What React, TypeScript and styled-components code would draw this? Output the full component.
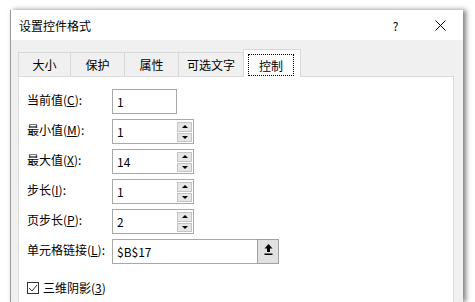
import React from 'react';
import styled, { createGlobalStyle } from 'styled-components';

const GlobalStyle = createGlobalStyle`
  html, body {
    margin: 0;
    padding: 0;
    background: #ffffff;
    overflow: hidden;
  }
  body {
    font-family: "Noto Sans CJK SC", "Noto Sans", sans-serif;
    font-size: 12px;
    color: #000000;
  }
`;

const Window = styled.div`
  margin: 10px 0 0 10px;
  width: 452px;
  height: 292px;
  border-left: 1px solid #9a9a9a;
  background: #f0f0f0;
  box-shadow: 3px 0 5px rgba(0, 0, 0, 0.5);
  display: flex;
  flex-direction: column;
`;

const TitleBar = styled.div`
  height: 30px;
  background: #ffffff;
  display: flex;
  align-items: center;
  padding-left: 8px;
`;

const Title = styled.div`
  flex: 1;
  line-height: 17px;
`;

const CaptionButton = styled.div`
  width: 45px;
  height: 30px;
  display: flex;
  align-items: center;
  justify-content: center;
  font-size: 12px;
`;

const Body = styled.div`
  flex: 1;
  min-height: 0;
  padding: 9px 9px 0 7px;
  display: flex;
  flex-direction: column;
`;

const TabRow = styled.div`
  display: flex;
  align-items: flex-end;
  position: relative;
  z-index: 1;
`;

const Tab = styled.div<{ $w: number; $active?: boolean }>`
  box-sizing: border-box;
  width: ${({ $w }) => $w}px;
  height: ${({ $active }) => ($active ? 28 : 24)}px;
  margin-bottom: ${({ $active }) => ($active ? -1 : 0)}px;
  margin-left: -1px;
  border: 1px solid #d9d9d9;
  border-bottom: none;
  background: ${({ $active }) => ($active ? '#ffffff' : '#f0f0f0')};
  position: relative;
  z-index: ${({ $active }) => ($active ? 2 : 1)};
  display: flex;
  align-items: center;
  justify-content: ${({ $active }) => ($active ? 'flex-start' : 'center')};
  padding-left: ${({ $active }) => ($active ? 4 : 0)}px;
  line-height: 17px;

  &:first-child {
    margin-left: 0;
  }
`;

const FocusLabel = styled.span`
  border: 1px dotted #000000;
  padding: 2px 10px 1px;
  margin-top: 2px;
`;

const Panel = styled.div`
  flex: 1;
  min-height: 0;
  background: #ffffff;
  border: 1px solid #d9d9d9;
  border-bottom: none;
  padding: 12px 8px 0;
`;

const Form = styled.div`
  display: grid;
  grid-template-columns: 85px auto;
  row-gap: 5px;
  justify-items: start;
`;

const Label = styled.div`
  line-height: 17px;
  margin-top: 2px;
  white-space: nowrap;
`;

const Field = styled.div<{ $w: number }>`
  box-sizing: border-box;
  width: ${({ $w }) => $w}px;
  height: 25px;
  border: 1px solid #a8a8a8;
  background: #ffffff;
  display: flex;
  align-items: stretch;
`;

const Value = styled.div`
  flex: 1;
  padding-left: 4px;
  display: flex;
  align-items: center;
  line-height: 17px;
`;

const Spinner = styled.div`
  width: 15px;
  padding: 2px 1px 1px 0;
  display: flex;
  flex-direction: column;
  gap: 1px;
`;

const SpinButton = styled.div`
  flex: 1;
  background: #e6e6e6;
  border: 1px solid #c4c4c4;
  display: flex;
  align-items: center;
  justify-content: center;
`;

const Arrow = styled.span<{ $down?: boolean }>`
  width: 0;
  height: 0;
  border-left: 3px solid transparent;
  border-right: 3px solid transparent;
  ${({ $down }) =>
    $down ? 'border-top: 3px solid #000000;' : 'border-bottom: 3px solid #000000;'}
`;

const RefButton = styled.div`
  box-sizing: border-box;
  width: 22px;
  margin: -1px -1px -1px 0;
  background: #e1e1e1;
  border: 1px solid #a0a0a0;
  display: flex;
  justify-content: center;
  padding-top: 4px;
`;

const CheckRow = styled.div`
  margin-top: 15px;
  display: flex;
  align-items: center;
  gap: 4px;
  line-height: 17px;
`;

const CheckBox = styled.div`
  box-sizing: border-box;
  width: 12px;
  height: 12px;
  border: 1px solid #333333;
  display: flex;
  align-items: center;
  justify-content: center;
`;

const tabs = [
  { label: '大小', w: 53 },
  { label: '保护', w: 55 },
  { label: '属性', w: 55 },
  { label: '可选文字', w: 66 },
];

const spins = [
  { label: '最小值', key: 'M', value: '1' },
  { label: '最大值', key: 'X', value: '14' },
  { label: '步长', key: 'I', value: '1' },
  { label: '页步长', key: 'P', value: '2' },
];

const SpinField: React.FC<{ value: string }> = ({ value }) => (
  <Field $w={82}>
    <Value>{value}</Value>
    <Spinner>
      <SpinButton>
        <Arrow />
      </SpinButton>
      <SpinButton>
        <Arrow $down />
      </SpinButton>
    </Spinner>
  </Field>
);

const App: React.FC = () => {
  return (
    <>
      <GlobalStyle />
      <Window>
        <TitleBar>
          <Title>设置控件格式</Title>
          <CaptionButton>?</CaptionButton>
          <CaptionButton>
            <svg width="11" height="11" viewBox="0 0 11 11">
              <path d="M0.5 0.5 L10.5 10.5 M10.5 0.5 L0.5 10.5" stroke="#000" strokeWidth="1" fill="none" />
            </svg>
          </CaptionButton>
        </TitleBar>
        <Body>
          <TabRow>
            {tabs.map((t) => (
              <Tab key={t.label} $w={t.w}>
                {t.label}
              </Tab>
            ))}
            <Tab $w={58} $active>
              <FocusLabel>控制</FocusLabel>
            </Tab>
          </TabRow>
          <Panel>
            <Form>
              <Label>
                当前值(<u>C</u>):
              </Label>
              <Field $w={65}>
                <Value>1</Value>
              </Field>
              {spins.map((s) => (
                <React.Fragment key={s.key}>
                  <Label>
                    {s.label}(<u>{s.key}</u>):
                  </Label>
                  <SpinField value={s.value} />
                </React.Fragment>
              ))}
              <Label>
                单元格链接(<u>L</u>):
              </Label>
              <Field $w={167}>
                <Value>$B$17</Value>
                <RefButton>
                  <svg width="9" height="11" viewBox="0 0 9 11">
                    <path d="M4.5 0 L8.5 4.5 L6 4.5 L6 8 L3 8 L3 4.5 L0.5 4.5 Z" fill="#000" />
                    <rect x="0.5" y="9.5" width="8" height="1.5" fill="#000" />
                  </svg>
                </RefButton>
              </Field>
            </Form>
            <CheckRow>
              <CheckBox>
                <svg width="10" height="10" viewBox="0 0 10 10">
                  <path d="M1 5 L4 8 L9 2" stroke="#333" strokeWidth="1" fill="none" />
                </svg>
              </CheckBox>
              <span>
                三维阴影(<u>3</u>)
              </span>
            </CheckRow>
          </Panel>
        </Body>
      </Window>
    </>
  );
};

export default App;
